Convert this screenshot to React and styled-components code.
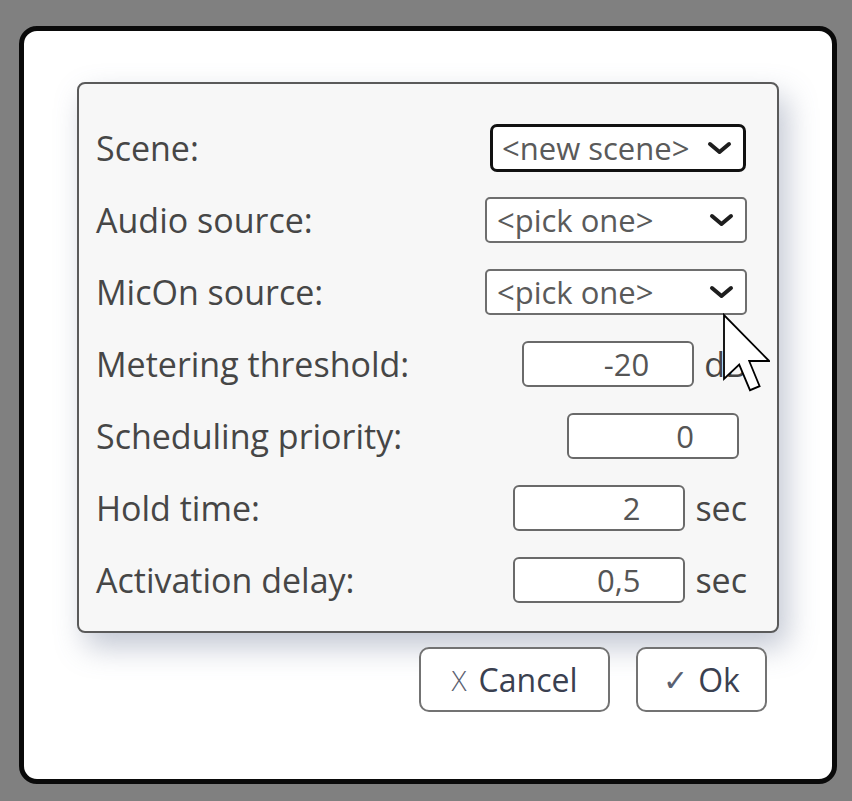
import React from 'react';
import styled, { createGlobalStyle } from 'styled-components';

const GlobalStyle = createGlobalStyle`
    html, body {
        margin: 0;
        padding: 0;
        background: #808080;
    }
    * {
        box-sizing: border-box;
    }
`;

const Page = styled.div`
    // box
    width: 852px;
    height: 801px;
    padding: 26px 15px 18px 19px;
    background: #808080;
    font-family: "Open Sans", "Noto Sans", sans-serif;
`;

const Dialog = styled.div`
    // box
    position: relative;
    width: 818px;
    height: 758px;
    padding: 51px 53px 0 53px;
    background: #ffffff;
    border: 5px solid #0a0a0a;
    border-radius: 18px;
`;

const Panel = styled.div`
    // display
    display: flex;
    flex-direction: column;
    gap: 24px;
    // box
    width: 702px;
    height: 551px;
    padding: 40px 30px 0 17px;
    background: #f7f7f7;
    border: 2px solid #5a5a5a;
    border-radius: 8px;
    box-shadow: 8px 14px 30px rgba(95, 108, 140, 0.38);
`;

const Row = styled.div`
    // display
    display: flex;
    align-items: center;
    justify-content: space-between;
    // box
    height: 48px;
`;

const Label = styled.span`
    // font
    color: #464646;
    font-size: 34px;
    line-height: 1;
    white-space: nowrap;
`;

const Controls = styled.div`
    // display
    display: flex;
    align-items: center;
    gap: 10px;
    // box
    margin-right: ${props => props.$inset || 0}px;
`;

const Select = styled.div`
    // display
    display: flex;
    align-items: center;
    justify-content: space-between;
    // box
    width: ${props => props.$width}px;
    height: ${props => (props.$focused ? 48 : 46)}px;
    padding: 0 11px 0 ${props => (props.$focused ? 9 : 10)}px;
    background: #ffffff;
    border: ${props => (props.$focused ? '3px solid #111111' : '2px solid #6e6e6e')};
    border-radius: ${props => (props.$focused ? 7 : 5)}px;
    // font
    color: #5a5a5a;
    font-size: 31px;
    line-height: 1;
    white-space: nowrap;
`;

const NumberInput = styled.input`
    // box
    width: 172px;
    height: 46px;
    padding: 0 43px 0 8px;
    background: #ffffff;
    border: 2px solid #6a6a6a;
    border-radius: 6px;
    outline: none;
    // font
    color: #555555;
    font-family: "Open Sans", "Noto Sans", sans-serif;
    font-size: 31px;
    text-align: right;
`;

const Unit = styled.span`
    // font
    color: #464646;
    font-size: 34px;
    line-height: 1;
`;

const Buttons = styled.div`
    // display
    display: flex;
    justify-content: flex-end;
    gap: 26px;
    // box
    width: 702px;
    margin-top: 14px;
    padding-right: 12px;
`;

const Button = styled.button`
    // display
    display: flex;
    align-items: center;
    justify-content: center;
    gap: ${props => props.$gap || 10}px;
    // box
    width: ${props => props.$width}px;
    height: 65px;
    background: #ffffff;
    border: 2px solid #737373;
    border-radius: 10px;
    // font
    color: #3a4050;
    font-family: "Open Sans", "Noto Sans", sans-serif;
    font-size: 32px;
`;

const Glyph = styled.span`
    font-weight: 300;
    color: #5a6070;
    font-size: ${props => props.$size || 30}px;
`;

const Cursor = styled.svg`
    // overlay: mouse pointer captured in the screenshot
    position: absolute;
    left: 698px;
    top: 282px;
`;

const Chevron = () => (
    <svg width="25" height="14" viewBox="0 0 25 14">
        <polyline points="3,3 12.5,11 22,3" fill="none" stroke="#1e1e1e" strokeWidth="4" strokeLinecap="round" strokeLinejoin="round" />
    </svg>
);

const selects = [
    { label: 'Scene:', value: '<new scene>', width: 256, focused: true },
    { label: 'Audio source:', value: '<pick one>', width: 262 },
    { label: 'MicOn source:', value: '<pick one>', width: 262 },
];

const numbers = [
    { label: 'Metering threshold:', value: '-20', unit: 'dB' },
    { label: 'Scheduling priority:', value: '0', inset: 8 },
    { label: 'Hold time:', value: '2', unit: 'sec' },
    { label: 'Activation delay:', value: '0,5', unit: 'sec' },
];

export default function App() {
    return (
        <Page>
            <GlobalStyle />
            <Dialog>
                <Panel>
                    {selects.map(({ label, value, width, focused }) => (
                        <Row key={label}>
                            <Label>{label}</Label>
                            <Controls $inset={focused ? 1 : 0}>
                                <Select $width={width} $focused={focused}>
                                    <span>{value}</span>
                                    <Chevron />
                                </Select>
                            </Controls>
                        </Row>
                    ))}
                    {numbers.map(({ label, value, unit, inset }) => (
                        <Row key={label}>
                            <Label>{label}</Label>
                            <Controls $inset={inset}>
                                <NumberInput type="text" value={value} readOnly />
                                {unit && <Unit>{unit}</Unit>}
                            </Controls>
                        </Row>
                    ))}
                </Panel>
                <Buttons>
                    <Button $width={191} $gap={12}>
                        <Glyph $size={28}>X</Glyph>
                        <span>Cancel</span>
                    </Button>
                    <Button $width={131}>
                        <Glyph>✓</Glyph>
                        <span>Ok</span>
                    </Button>
                </Buttons>
                <Cursor width="48" height="80" viewBox="0 0 12 20">
                    <path d="M0.5 0.5 L0.5 16.5 L4.3 12.9 L7 19.3 L9.4 18.3 L6.8 12 L11.8 12 Z" fill="#ffffff" stroke="#000000" strokeWidth="0.45" strokeLinejoin="miter" />
                </Cursor>
            </Dialog>
        </Page>
    );
}
